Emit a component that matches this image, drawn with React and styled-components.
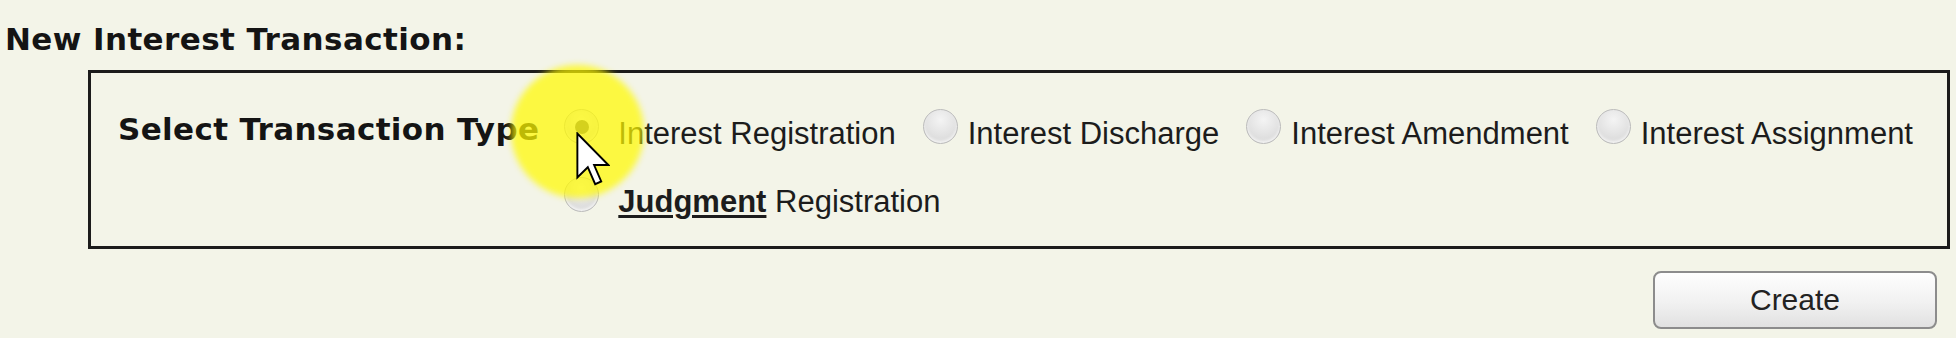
import React from "react";
import styled, { createGlobalStyle } from "styled-components";

const GlobalStyle = createGlobalStyle`
  html, body {
    margin: 0;
    padding: 0;
    background: #f3f4e8;
  }
  body {
    width: 1956px;
    height: 338px;
    overflow: hidden;
  }
`;

const Page = styled.div`
  position: relative;
  padding: 21px 6px 0 5px;
  color: #151515;
`;

const Heading = styled.h2`
  margin: 0;
  font-family: "DejaVu Sans", Verdana, sans-serif;
  font-weight: bold;
  font-size: 31px;
  letter-spacing: 0.4px;
  line-height: 36px;
  color: #141414;
`;

const Panel = styled.fieldset`
  display: flex;
  align-items: flex-start;
  margin: 13px 0 0 83px;
  padding: 36px 12px 26px 27px;
  border: 3px solid #1b1b1b;
  min-width: 0;
`;

const TypeLabel = styled.div`
  margin: 2px 25px 0 0;
  font-family: "DejaVu Sans", Verdana, sans-serif;
  font-weight: bold;
  font-size: 31px;
  letter-spacing: 0.35px;
  line-height: 36px;
  white-space: nowrap;
  color: #141414;
`;

const Options = styled.div`
  flex: 1;
  display: flex;
  flex-wrap: wrap;
  column-gap: 27px;
  row-gap: 25px;
`;

const Option = styled.label`
  display: flex;
  align-items: flex-start;
  cursor: pointer;
`;

const Radio = styled.input.attrs({ type: "radio" })`
  appearance: none;
  flex: none;
  width: 35px;
  height: 35px;
  margin: 0 ${(p) => (p.$lead ? 19 : 10)}px 0 0;
  border-radius: 50%;
  border: 1px solid #bcbcbc;
  background: radial-gradient(circle at 50% 30%, #f4f4f4 0%, #e2e2e2 55%, #d2d2d2 100%);
  box-shadow: inset 0 -2px 3px rgba(255, 255, 255, 0.7);
  position: relative;

  &:checked::after {
    content: "";
    position: absolute;
    left: 50%;
    top: 50%;
    width: 14px;
    height: 14px;
    margin: -7px 0 0 -7px;
    border-radius: 50%;
    background: #6a6a6a;
  }
`;

const OptionText = styled.span`
  margin-top: 7px;
  font-family: "Liberation Sans", Arial, sans-serif;
  font-size: 31px;
  line-height: 36px;
  white-space: nowrap;
  color: #1c1c1c;

  b {
    font-weight: bold;
    text-decoration: underline;
    text-underline-offset: 3px;
  }
`;

const Actions = styled.div`
  display: flex;
  justify-content: flex-end;
  margin-top: 22px;
  padding-right: 13px;
`;

const Button = styled.button`
  width: 284px;
  height: 58px;
  border: 2px solid #8c8c8c;
  border-radius: 8px;
  background: linear-gradient(#fefefe, #f1f1f1 55%, #e1e1e1);
  font-family: "Liberation Sans", Arial, sans-serif;
  font-size: 30px;
  color: #222;
  cursor: pointer;
`;

const Highlight = styled.div`
  position: absolute;
  left: 511px;
  top: 65px;
  width: 133px;
  height: 133px;
  border-radius: 50%;
  background: rgba(255, 250, 0, 0.72);
  filter: blur(3px);
  pointer-events: none;
`;

const Cursor = styled.svg`
  position: absolute;
  left: 576px;
  top: 132px;
  pointer-events: none;
`;

const options = [
  { id: "reg", label: "Interest Registration", lead: true, checked: true },
  { id: "dis", label: "Interest Discharge" },
  { id: "amd", label: "Interest Amendment" },
  { id: "asg", label: "Interest Assignment" },
  { id: "jud", label: "Registration", strong: "Judgment", lead: true },
];

export default function App() {
  return (
    <>
      <GlobalStyle />
      <Page>
        <Heading>New Interest Transaction:</Heading>
        <Panel>
          <TypeLabel>Select Transaction Type</TypeLabel>
          <Options>
            {options.map((o) => (
              <Option key={o.id}>
                <Radio name="txType" $lead={o.lead} defaultChecked={o.checked} />
                <OptionText>
                  {o.strong && <b>{o.strong}</b>}
                  {o.strong ? " " : ""}
                  {o.label}
                </OptionText>
              </Option>
            ))}
          </Options>
        </Panel>
        <Actions>
          <Button>Create</Button>
        </Actions>
        <Highlight />
        <Cursor width="34" height="54" viewBox="0 0 12.4 19.6">
          <path
            d="M0.5 0.5 L0.5 16.5 L4.3 12.8 L7 19 L9.2 18 L6.6 12 L11.8 12 Z"
            fill="#fff"
            stroke="#000"
            strokeWidth="0.7"
            strokeLinejoin="miter"
          />
        </Cursor>
      </Page>
    </>
  );
}
